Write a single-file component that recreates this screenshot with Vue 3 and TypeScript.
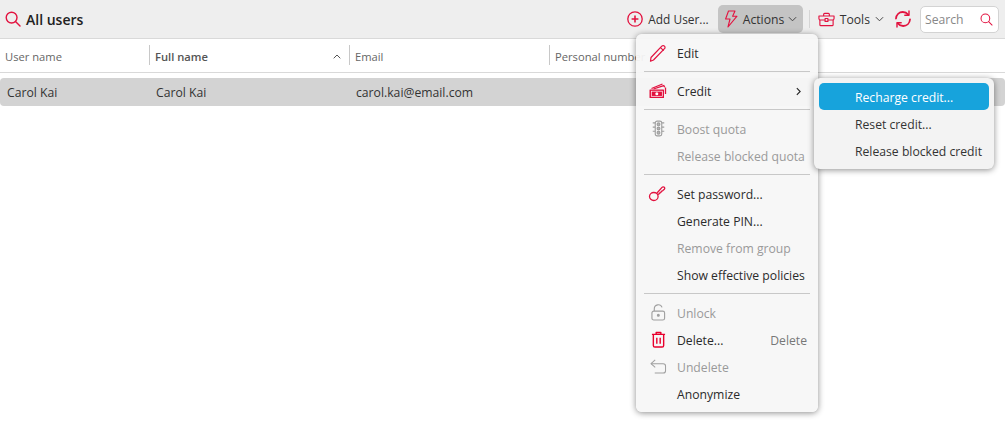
<script setup lang="ts">
interface Item { label: string; disabled?: boolean; icon?: string; shortcut?: string; arrow?: boolean; sep?: boolean }
const items: Item[] = [
  { label: 'Edit', icon: 'edit' },
  { sep: true, label: '' },
  { label: 'Credit', icon: 'credit', arrow: true },
  { sep: true, label: '' },
  { label: 'Boost quota', icon: 'light', disabled: true },
  { label: 'Release blocked quota', disabled: true },
  { sep: true, label: '' },
  { label: 'Set password...', icon: 'key' },
  { label: 'Generate PIN...' },
  { label: 'Remove from group', disabled: true },
  { label: 'Show effective policies' },
  { sep: true, label: '' },
  { label: 'Unlock', icon: 'lock', disabled: true },
  { label: 'Delete...', icon: 'trash', shortcut: 'Delete' },
  { label: 'Undelete', icon: 'undo', disabled: true },
  { label: 'Anonymize' }
]
const subItems = ['Recharge credit...', 'Reset credit...', 'Release blocked credit']
const columns = [
  { label: 'User name', width: 150 },
  { label: 'Full name', width: 200, bold: true, sort: true },
  { label: 'Email', width: 200 },
  { label: 'Personal number', width: 200 }
]
const cells = [
  { text: 'Carol Kai', width: 149 },
  { text: 'Carol Kai', width: 200 },
  { text: 'carol.kai@email.com', width: 280 }
]
</script>

<template>
  <div class="page">
    <header class="toolbar">
      <svg class="title-icon" viewBox="0 0 16 16" width="16" height="16" fill="none" stroke="#e2123f" stroke-width="1.4">
        <circle cx="6.6" cy="6.6" r="5.4" />
        <path d="M10.5 10.5 15 15" stroke-linecap="round" />
      </svg>
      <h1 class="title">All users</h1>
      <div class="actions">
        <button class="tool add">
          <svg viewBox="0 0 16 16" width="16" height="16" fill="none" stroke="#e2123f" stroke-width="1.3">
            <circle cx="8" cy="8" r="7.2" />
            <path d="M8 4.6v6.8M4.6 8h6.8" stroke-width="1.6" />
          </svg>
          <span>Add User...</span>
        </button>
        <button class="tool active">
          <svg viewBox="0 0 14 18" width="14" height="18" fill="none" stroke="#e2123f" stroke-width="1.1" stroke-linejoin="round">
            <path d="M4.5 1H11L8.6 6.2H13L4 17l2-8H1.6Z" />
          </svg>
          <span>Actions</span>
          <svg class="chev" viewBox="0 0 10 6" width="9" height="6" fill="none" stroke="#444" stroke-width="1.1"><path d="M1 1l4 4 4-4" /></svg>
        </button>
        <span class="divider"></span>
        <button class="tool tools">
          <svg viewBox="0 0 18 15" width="17" height="15" fill="none" stroke="#e2123f" stroke-width="1.2" stroke-linejoin="round">
            <path d="M1 3.800h16v2.600c0 1-.7 1.600-1.600 1.600H2.600C1.700 8 1 7.400 1 6.400Z" />
            <path d="M2 8v5a1 1 0 0 0 1 1h12a1 1 0 0 0 1-1V8" />
            <path d="M6 3.800V2a1 1 0 0 1 1-1h4a1 1 0 0 1 1 1v1.800" />
            <rect x="7.500" y="6.500" width="3" height="3" fill="#eee" />
          </svg>
          <span>Tools</span>
          <svg class="chev" viewBox="0 0 10 6" width="9" height="6" fill="none" stroke="#444" stroke-width="1.1"><path d="M1 1l4 4 4-4" /></svg>
        </button>
        <svg class="refresh" viewBox="0 0 18 18" width="18" height="18" fill="none" stroke="#e2123f" stroke-width="1.800" stroke-linecap="round" stroke-linejoin="round">
          <path d="M2 8.500C2.300 4.700 5.200 2 8.800 2c2.200 0 4 .9 5.400 2.600" />
          <path d="M15 1v4.200h-4.200" stroke-width="1.400" />
          <path d="M16 9.500c-.3 3.800-3.200 6.500-6.800 6.500-2.200 0-4-.9-5.400-2.600" />
          <path d="M3 17v-4.200h4.200" stroke-width="1.400" />
        </svg>
        <div class="search">
          <span>Search</span>
          <svg viewBox="0 0 14 14" width="13" height="13" fill="none" stroke="#e2123f" stroke-width="1.100">
            <circle cx="5.800" cy="5.800" r="4.700" />
            <path d="M9.300 9.300 13 13" stroke-linecap="round" />
          </svg>
        </div>
      </div>
    </header>

    <div class="thead">
      <div v-for="c in columns" :key="c.label" class="th" :class="{ bold: c.bold }" :style="{ width: c.width + 'px' }">
        <span class="th-label">{{ c.label }}</span>
        <svg v-if="c.sort" class="sort" viewBox="0 0 8 5" width="8" height="5" fill="none" stroke="#555" stroke-width="1"><path d="M.7 4.300 4 1l3.300 3.300" /></svg>
      </div>
    </div>

    <div class="row">
      <div v-for="(c, i) in cells" :key="i" class="td" :style="{ width: c.width + 'px' }">{{ c.text }}</div>
    </div>

    <div class="menu">
      <template v-for="(it, i) in items" :key="i">
        <div v-if="it.sep" class="sep"></div>
        <div v-else class="item" :class="{ disabled: it.disabled }">
          <span class="ico">
            <svg v-if="it.icon === 'edit'" viewBox="0 0 20 20" width="20" height="20" fill="none" stroke="#e2123f" stroke-width="1.200" stroke-linejoin="round">
              <path d="M3 14.500 13.800 3.200c.8-.8 2-.8 2.700 0 .7.700.7 1.800 0 2.500L5.500 17l-3 1.200Z" />
              <path d="M12.500 4.600l3.200 3" />
            </svg>
            <svg v-else-if="it.icon === 'credit'" viewBox="0 0 20 16" width="20" height="16">
              <path d="M3.500 5.500 14.500 1" stroke="#e2123f" stroke-width="1.300" fill="none" />
              <path d="M5.500 6 15.800 2.600l.9 1.700" stroke="#e2123f" stroke-width="1.300" fill="none" />
              <path d="M17.500 4.500v6.500" stroke="#e2123f" stroke-width="1.300" fill="none" />
              <rect x="1.500" y="6.500" width="14.500" height="8.500" rx=".5" fill="#e2123f" />
              <rect x="3.300" y="8.200" width="11" height="5.100" fill="none" stroke="#fff" stroke-width=".7" />
              <circle cx="8.800" cy="10.700" r="1.500" fill="#fff" />
            </svg>
            <svg v-else-if="it.icon === 'light'" viewBox="0 0 14 18" width="13" height="17" fill="none" stroke="#9e9e9e" stroke-width="1.200">
              <rect x="3.500" y="1" width="7" height="16" rx="2" />
              <circle cx="7" cy="4.500" r="1.500" fill="#b5b5b5" />
              <circle cx="7" cy="9" r="1.500" fill="#b5b5b5" />
              <circle cx="7" cy="13.500" r="1.500" fill="#b5b5b5" />
              <path d="M.8 3h2.700M.8 7.500h2.700M.8 12h2.700M10.500 3h2.700M10.500 7.500h2.700M10.500 12h2.700" />
            </svg>
            <svg v-else-if="it.icon === 'key'" viewBox="0 0 20 20" width="20" height="20" fill="none" stroke="#e2123f" stroke-width="1.300" stroke-linejoin="round" stroke-linecap="round">
              <ellipse cx="5.800" cy="12.500" rx="4.300" ry="4" />
              <path d="M8.800 9.300 14 3.400c.7-.7 1.700-.7 2.300-.1.600.6.600 1.400 0 2l-1.700 1.500-1 .3-.4 1-1 .3-.5 1-1.300.9" />
            </svg>
            <svg v-else-if="it.icon === 'lock'" viewBox="0 0 16 18" width="15" height="17" fill="none" stroke="#a0a0a0" stroke-width="1.200">
              <path d="M3.500 7.500V5a4.300 4.300 0 0 1 8.300-1.500" />
              <rect x="1" y="7.500" width="13.500" height="9.500" rx="2" />
              <circle cx="7.800" cy="12" r="1" fill="#a0a0a0" />
            </svg>
            <svg v-else-if="it.icon === 'trash'" viewBox="0 0 16 18" width="15" height="17" fill="none" stroke="#e8002d" stroke-width="1.500" stroke-linejoin="round">
              <path d="M1 3.500h14M5.500 3.500V1.500h5v2M2.500 3.500v11.800c0 1 .7 1.700 1.700 1.700h7.600c1 0 1.700-.7 1.700-1.700V3.500" />
              <path d="M6.200 7v6.500M9.800 7v6.500" />
            </svg>
            <svg v-else-if="it.icon === 'undo'" viewBox="0 0 18 16" width="17" height="15" fill="none" stroke="#a0a0a0" stroke-width="1.100" stroke-linejoin="round">
              <path d="M5.500 1 1 5l4.500 4" />
              <path d="M1 5h13c1.500 0 2.500 1 2.500 2.500v5c0 1.500-1 2.500-2.500 2.500H5" />
            </svg>
          </span>
          <span class="label">{{ it.label }}</span>
          <span v-if="it.shortcut" class="shortcut">{{ it.shortcut }}</span>
          <svg v-if="it.arrow" class="arrow" viewBox="0 0 6 10" width="5" height="9" fill="none" stroke="#222" stroke-width="1.300"><path d="M1 1l4 4-4 4" /></svg>
        </div>
      </template>
    </div>

    <div class="submenu">
      <div v-for="(s, i) in subItems" :key="s" class="sub-item" :class="{ selected: i === 0 }">{{ s }}</div>
    </div>
  </div>
</template>

<style scoped>
.page {
  position: relative;
  width: 1005px;
  height: 422px;
  overflow: hidden;
  background: #fff;
  font-family: "Open Sans", "Noto Sans", sans-serif;
  font-size: 12.200px;
  color: #333;
}
.toolbar {
  height: 38px;
  display: flex;
  align-items: center;
  background: #eeeeee;
  border-bottom: 1px solid #d9d9d9;
  padding: 0 6px 0 5px;
  box-sizing: content-box;
}
.title-icon { margin-right: 5px; flex: none; }
.title {
  margin: 0;
  font-size: 14px;
  font-weight: 600;
  color: #222;
}
.actions {
  margin-left: auto;
  display: flex;
  align-items: center;
}
.tool {
  display: flex;
  align-items: center;
  gap: 5px;
  height: 28px;
  padding: 0 4px;
  border: 0;
  border-radius: 5px;
  background: none;
  font: inherit;
  color: #333;
}
.add { margin-right: 5px; gap: 5px; }
.add span { font-size: 11.900px; }
.active { background: #c4c4c4; width: 85px; box-sizing: border-box; padding: 0 4px 0 6px; }
.active .chev { margin-left: -1px; }
.tools { padding: 0 2px; gap: 5px; }
.divider {
  width: 1px;
  height: 18px;
  background: #d5d5d5;
  margin: 0 6px 0 6px;
}
.refresh { margin: 0 8px 0 8px; flex: none; }
.search {
  width: 79px;
  height: 27px;
  box-sizing: border-box;
  display: flex;
  align-items: center;
  justify-content: space-between;
  padding: 0 5px 0 4px;
  background: #fff;
  border: 1px solid #d3d3d3;
  border-radius: 5px;
  color: #888;
}
.thead {
  display: flex;
  height: 33px;
  border-bottom: 1px solid #d9d9d9;
  font-size: 11.200px;
  color: #666;
}
.th {
  display: flex;
  align-items: center;
  justify-content: space-between;
  box-sizing: border-box;
  padding: 2px 9px 0 5px;
  position: relative;
  white-space: nowrap;
}
.th + .th::before {
  content: "";
  position: absolute;
  left: -1px;
  top: 6px;
  height: 20px;
  width: 1px;
  background: #c8c8c8;
}
.th.bold { font-weight: 600; color: #555; }
.row {
  display: flex;
  align-items: center;
  height: 28px;
  margin-top: 5px;
  background: #d3d3d3;
  border-radius: 4px;
  color: #333;
}
.td { padding-left: 7px; box-sizing: border-box; }
.menu {
  position: absolute;
  left: 636px;
  top: 34px;
  width: 182px;
  height: 378px;
  box-sizing: border-box;
  padding: 5px 0;
  background: rgba(247, 247, 247, 0.94);
  border-radius: 6px;
  box-shadow: 0 1px 6px rgba(0, 0, 0, 0.45);
}
.item {
  display: flex;
  align-items: center;
  height: 27px;
  box-sizing: border-box;
  padding: 2px 11px 0 41px;
  position: relative;
  color: #2b2b2b;
  white-space: nowrap;
}
.item.disabled { color: #9a9a9a; }
.ico {
  position: absolute;
  left: 10px;
  top: 0;
  width: 24px;
  height: 27px;
  display: flex;
  align-items: center;
  justify-content: center;
}
.shortcut { margin-left: auto; color: #777; }
.arrow { margin-left: auto; margin-right: 6px; }
.sep {
  height: 1px;
  margin: 5px 8px;
  background: #c8c8c8;
}
.submenu {
  position: absolute;
  left: 814px;
  top: 78px;
  width: 180px;
  height: 91px;
  box-sizing: border-box;
  padding: 5px;
  background: #f3f3f3;
  border-radius: 6px;
  box-shadow: 0 1px 6px rgba(0, 0, 0, 0.45);
}
.sub-item {
  height: 27px;
  line-height: 29px;
  padding-left: 36px;
  border-radius: 5px;
  color: #333;
  white-space: nowrap;
}
.sub-item.selected { background: #17a3dc; color: #fff; }
</style>
